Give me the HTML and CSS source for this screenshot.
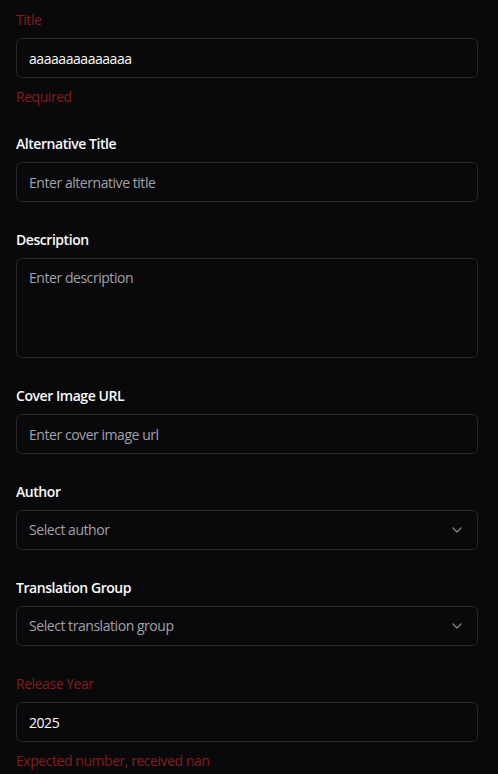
FILE: index.html
```html
<!DOCTYPE html>
<html lang="en">
<head>
<meta charset="utf-8">
<title>Form</title>
<link rel="stylesheet" href="styles.css">
</head>
<body>
<form class="form">
  <div class="item">
    <label class="label error">Title</label>
    <input class="input" type="text" value="aaaaaaaaaaaaaa">
    <p class="message">Required</p>
  </div>
  <div class="item">
    <label class="label">Alternative Title</label>
    <input class="input" type="text" placeholder="Enter alternative title">
  </div>
  <div class="item">
    <label class="label">Description</label>
    <textarea class="input textarea" placeholder="Enter description"></textarea>
  </div>
  <div class="item">
    <label class="label">Cover Image URL</label>
    <input class="input" type="text" placeholder="Enter cover image url">
  </div>
  <div class="item">
    <label class="label">Author</label>
    <button type="button" class="input select">
      <span class="placeholder">Select author</span>
      <svg class="chevron" viewBox="0 0 24 24" width="16" height="16" fill="none" stroke="currentColor" stroke-width="2" stroke-linecap="round" stroke-linejoin="round"><path d="m6 9 6 6 6-6"/></svg>
    </button>
  </div>
  <div class="item">
    <label class="label">Translation Group</label>
    <button type="button" class="input select">
      <span class="placeholder">Select translation group</span>
      <svg class="chevron" viewBox="0 0 24 24" width="16" height="16" fill="none" stroke="currentColor" stroke-width="2" stroke-linecap="round" stroke-linejoin="round"><path d="m6 9 6 6 6-6"/></svg>
    </button>
  </div>
  <div class="item">
    <label class="label error">Release Year</label>
    <input class="input" type="text" value="2025">
    <p class="message">Expected number, received nan</p>
  </div>
</form>
</body>
</html>
```

FILE: styles.css
```css
* { box-sizing: border-box; }

html, body {
  margin: 0;
  background: #09090b;
}

body {
  padding: 9px 20px 0 16px;
  font-family: "Open Sans", "Noto Sans", "Liberation Sans", sans-serif;
  color: #fafafa;
  font-size: 14px;
  letter-spacing: -0.45px;
}

.form {
  display: flex;
  flex-direction: column;
  gap: 27px;
}

.item {
  display: flex;
  flex-direction: column;
  gap: 9px;
}

.label {
  padding-top: 1px;
  margin-bottom: -1px;
  font-size: 14px;
  line-height: 20px;
  font-weight: 600;
  color: #fafafa;
}

.label.error {
  color: #861d1d;
  font-weight: 500;
}

.message {
  margin: 0 0 -1px;
  font-size: 14px;
  line-height: 20px;
  font-weight: 500;
  color: #861d1d;
}

.input {
  display: flex;
  align-items: center;
  width: 100%;
  height: 40px;
  margin: 0;
  padding: 0 12px;
  background: #09090b;
  border: 1px solid #27272a;
  border-radius: 6px;
  color: #fafafa;
  font-family: inherit;
  font-size: 14px;
  line-height: 20px;
  letter-spacing: -0.45px;
  outline: none;
}

.input::placeholder,
.placeholder {
  color: #a1a1aa;
}

.textarea {
  height: 100px;
  padding: 9px 12px 8px;
  resize: none;
}

.select {
  justify-content: space-between;
  text-align: left;
  cursor: pointer;
}

.chevron {
  flex: none;
  color: #fafafa;
  opacity: 0.5;
}
```
